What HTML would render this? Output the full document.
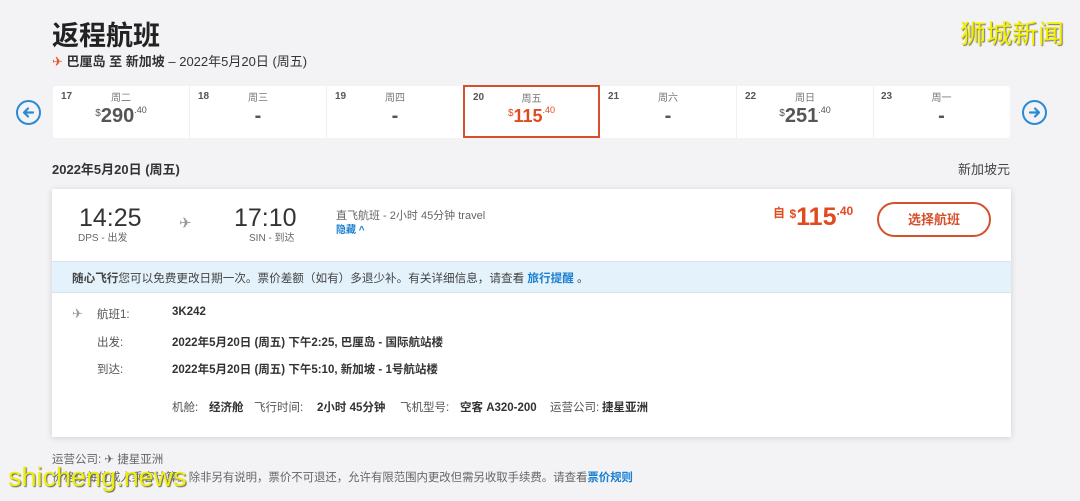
<!DOCTYPE html>
<html><head><meta charset="utf-8"><style>
*{margin:0;padding:0;box-sizing:border-box}
body{width:1080px;height:501px;background:#f3f3f5;font-family:"Liberation Sans","Noto Sans CJK SC",sans-serif;color:#333;position:relative;overflow:hidden}
.a{position:absolute;white-space:nowrap}
.strip{position:absolute;left:53px;top:86px;width:957px;height:52px;background:#fff;border-radius:3px}
.cell{position:absolute;top:0;width:137px;height:52px;border-right:1px solid #f0f0f0}
.cell .d{position:absolute;left:8px;top:5px;font-size:10px;font-weight:bold;color:#555}
.cell .w{position:absolute;left:0;width:100%;text-align:center;top:3px;font-size:10px;color:#777}
.cell .p{position:absolute;left:0;width:100%;text-align:center;top:19px;font-size:20px;font-weight:bold;color:#555}
.cell .p sup{font-size:9px;vertical-align:9px;font-weight:normal}
.cell .p .s{font-size:10px;vertical-align:6px;font-weight:normal}
.circ{position:absolute;width:25px;height:25px;border:2px solid #2a8ad4;border-radius:50%}
.card{position:absolute;left:52px;top:189px;width:959px;height:248px;background:#fff;box-shadow:0 1px 6px rgba(0,0,0,.15)}
.r{position:absolute;top:210px;font-size:11.5px;color:#555;white-space:nowrap}
.r b{color:#333}
</style></head><body>
<div class="a" style="left:52px;top:14px;font-size:27px;font-weight:bold;color:#222">返程航班</div>
<div class="a" style="left:52px;top:51px;font-size:13px;color:#333"><span style="color:#e5532b">✈</span> <b>巴厘岛 至 新加坡</b> – 2022年5月20日 (周五)</div>
<div class="a" style="left:960px;top:14px;font-size:26px;color:#f4f000;text-shadow:1px 1px 1px #776">狮城新闻</div>

<div class="circ" style="left:16px;top:100px"><svg width="21" height="21" viewBox="0 0 21 21"><path d="M15 10.5H6M10 6.5l-4 4 4 4" fill="none" stroke="#2a8ad4" stroke-width="2.2" stroke-linecap="round" stroke-linejoin="round"/></svg></div>
<div class="circ" style="left:1022px;top:100px"><svg width="21" height="21" viewBox="0 0 21 21"><path d="M6 10.5h9M11 6.5l4 4-4 4" fill="none" stroke="#2a8ad4" stroke-width="2.2" stroke-linecap="round" stroke-linejoin="round"/></svg></div>
<div class="strip">
 <div class="cell" style="left:0"><span class="d">17</span><span class="w">周二</span><span class="p"><span class="s">$</span>290<sup>.40</sup></span></div>
 <div class="cell" style="left:137px"><span class="d">18</span><span class="w">周三</span><span class="p">-</span></div>
 <div class="cell" style="left:274px"><span class="d">19</span><span class="w">周四</span><span class="p">-</span></div>
 <div class="cell" style="left:410px;border:2px solid #d4512b;height:53px;top:-1px"><span class="d">20</span><span class="w">周五</span><span class="p" style="color:#e04a1e;font-size:18px;top:18px"><span class="s">$</span>115<sup>.40</sup></span></div>
 <div class="cell" style="left:547px"><span class="d">21</span><span class="w">周六</span><span class="p">-</span></div>
 <div class="cell" style="left:684px"><span class="d">22</span><span class="w">周日</span><span class="p"><span class="s">$</span>251<sup>.40</sup></span></div>
 <div class="cell" style="left:820px;border:none"><span class="d">23</span><span class="w">周一</span><span class="p">-</span></div>
</div>

<div class="a" style="left:52px;top:159px;font-size:13px;font-weight:bold;color:#333">2022年5月20日 (周五)</div>
<div class="a" style="left:958px;top:159px;font-size:13px;color:#444">新加坡元</div>

<div class="card">
 <div class="a" style="left:27px;top:15px;font-size:25px;color:#333">14:25</div>
 <div class="a" style="left:26px;top:40px;font-size:10px;color:#666">DPS - 出发</div>
 <div class="a" style="left:127px;top:25px;font-size:15px;color:#999">✈</div>
 <div class="a" style="left:182px;top:15px;font-size:25px;color:#333">17:10</div>
 <div class="a" style="left:197px;top:40px;font-size:10px;color:#666">SIN - 到达</div>
 <div class="a" style="left:284px;top:18px;font-size:11px;color:#666">直飞航班 - 2小时 45分钟 travel</div>
 <div class="a" style="left:284px;top:32px;font-size:10px;color:#1a7fd0;font-weight:bold">隐藏 ^</div>
 <div class="a" style="left:721px;top:14px;color:#e04a1e;font-weight:bold"><span style="font-size:12px;vertical-align:8px">自</span> <span style="font-size:12px;vertical-align:7px">$</span><span style="font-size:25px">115</span><span style="font-size:12px;vertical-align:10px">.40</span></div>
 <div class="a" style="left:825px;top:13px;width:114px;height:35px;border:2px solid #d4512b;border-radius:18px;text-align:center;line-height:31px;font-size:13px;font-weight:bold;color:#d4512b">选择航班</div>
 <div class="a" style="left:0;top:72px;width:959px;height:32px;background:#e3f2fb;border-top:1px solid #d8e4ec;border-bottom:1px solid #d8e4ec"></div>
 <div class="a" style="left:20px;top:81px;font-size:11.6px;color:#444"><b>随心飞行</b>您可以免费更改日期一次。票价差额（如有）多退少补。有关详细信息，请查看 <b style="color:#1a7fd0">旅行提醒</b> 。</div>
 <div class="a" style="left:20px;top:117px;font-size:13px;color:#999">✈</div>
 <div class="a" style="left:45px;top:117px;font-size:11.5px;color:#555">航班1:</div>
 <div class="a" style="left:120px;top:117px;font-size:11.5px;font-weight:bold;color:#333">3K242</div>
 <div class="a" style="left:45px;top:145px;font-size:11.5px;color:#555">出发:</div>
 <div class="a" style="left:120px;top:145px;font-size:11.5px;font-weight:bold;color:#333">2022年5月20日 (周五) 下午2:25, 巴厘岛 - 国际航站楼</div>
 <div class="a" style="left:45px;top:172px;font-size:11.5px;color:#555">到达:</div>
 <div class="a" style="left:120px;top:172px;font-size:11.5px;font-weight:bold;color:#333">2022年5月20日 (周五) 下午5:10, 新加坡 - 1号航站楼</div>
 <span class="r" style="left:120px">机舱:</span><span class="r" style="left:157px"><b>经济舱</b></span>
 <span class="r" style="left:202px">飞行时间:</span><span class="r" style="left:265px"><b>2小时 45分钟</b></span>
 <span class="r" style="left:348px">飞机型号:</span><span class="r" style="left:408px"><b>空客 A320-200</b></span>
 <span class="r" style="left:498px">运营公司:</span><span class="r" style="left:550px"><b>捷星亚洲</b></span>
</div>

<div class="a" style="left:52px;top:451px;font-size:11.5px;color:#666">运营公司: ✈ 捷星亚洲</div>
<div class="a" style="left:52px;top:469px;font-size:11.4px;color:#666">价格以每位成人乘客计算。除非另有说明，票价不可退还，允许有限范围内更改但需另收取手续费。请查看<b style="color:#1a7fd0">票价规则</b></div>
<div class="a" style="left:8px;top:462px;font-size:27px;color:#eeee10;text-shadow:1px 1px 1px #665">shicheng.news</div>
</body></html>
